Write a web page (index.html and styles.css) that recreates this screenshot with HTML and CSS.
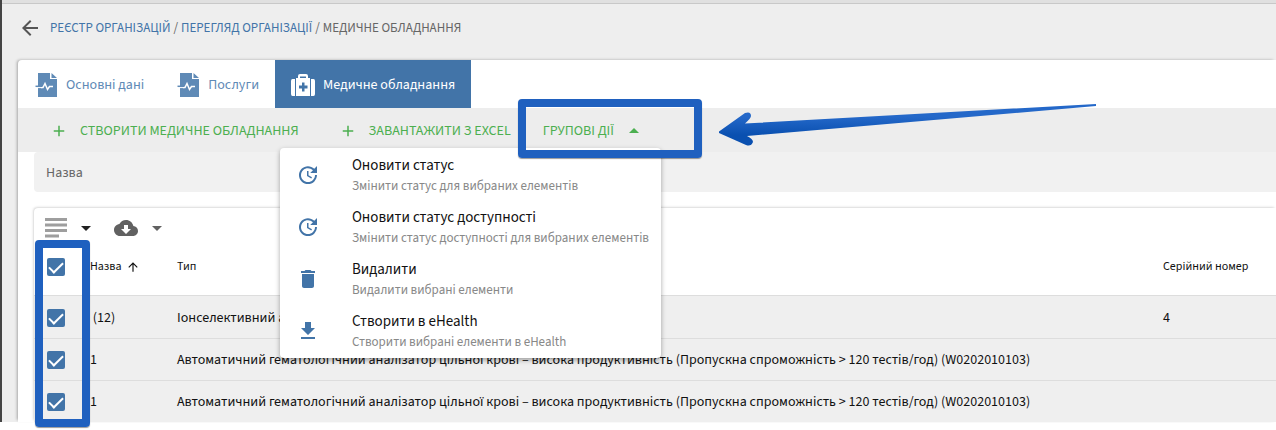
FILE: index.html
```html
<!DOCTYPE html>
<html lang="uk">
<head>
    <meta charset="UTF-8">
    <meta name="viewport" content="width=device-width, initial-scale=1">
    <title>Медичне обладнання</title>
    <link rel="stylesheet" href="styles.css">
</head>
<body>

<div class="app">
    <nav class="breadcrumbs">
        <button type="button" class="back" aria-label="Назад">
            <svg width="24" height="24" viewBox="0 0 24 24"><path d="M20 11H7.830l5.590-5.590L12 4l-8 8 8 8 1.410-1.410L7.830 13H20v-2z" fill="currentColor"/></svg>
        </button>
        <a href="#">РЕЄСТР ОРГАНІЗАЦІЙ</a>
        <span>/</span>
        <a href="#">ПЕРЕГЛЯД ОРГАНІЗАЦІЇ</a>
        <span>/</span>
        <span>МЕДИЧНЕ ОБЛАДНАННЯ</span>
    </nav>

    <main class="card">
        <div class="tabs">
            <button type="button" class="tab">
                <svg width="24" height="24" viewBox="0 0 24 24"><path d="M4 0h12v6h7v18H4zM17.500 0 23 5h-5.500z" fill="currentColor"/><path d="M7 14.500h2l2-4 2.500 6 2-3H19" fill="none" stroke="#fff" stroke-width="1.500"/><path d="M1.500 13.300H8" stroke="currentColor" stroke-width="1.500"/><path d="M4 14.600h4" stroke="#fff"/></svg>
                Основні дані
            </button>
            <button type="button" class="tab">
                <svg width="24" height="24" viewBox="0 0 24 24"><path d="M4 0h12v6h7v18H4zM17.500 0 23 5h-5.500z" fill="currentColor"/><path d="M7 14.500h2l2-4 2.500 6 2-3H19" fill="none" stroke="#fff" stroke-width="1.500"/><path d="M1.500 13.300H8" stroke="currentColor" stroke-width="1.500"/><path d="M4 14.600h4" stroke="#fff"/></svg>
                Послуги
            </button>
            <button type="button" class="tab active">
                <svg width="24" height="24" viewBox="0 0 24 24"><path fill="currentColor" fill-rule="evenodd" d="M5 5h2V3q0-2 2-2h6q2 0 2 2v2h2v18H5zM9 5h6V3.500H9zm2 4.500v3H8v3h3v3h2.500v-3h3v-3h-3v-3zM1.500 6H4v17H1.500Q0 23 0 21V8q0-2 1.500-2zM20 6h2.500Q24 6 24 8v13q0 2-1.500 2H20z"/></svg>
                Медичне обладнання
            </button>
        </div>

        <div class="actions">
            <button type="button" class="action">
                <svg width="18" height="18" viewBox="0 0 24 24"><path d="M19 13h-6v6h-2v-6H5v-2h6V5h2v6h6v2z" fill="currentColor"/></svg>
                СТВОРИТИ МЕДИЧНЕ ОБЛАДНАННЯ
            </button>
            <button type="button" class="action">
                <svg width="18" height="18" viewBox="0 0 24 24"><path d="M19 13h-6v6h-2v-6H5v-2h6V5h2v6h6v2z" fill="currentColor"/></svg>
                ЗАВАНТАЖИТИ З EXCEL
            </button>
            <div class="group">
                <button type="button" class="action" aria-expanded="true">
                    ГРУПОВІ ДІЇ
                    <svg width="24" height="24" viewBox="0 0 24 24"><path d="M7 14l5-5 5 5z" fill="currentColor"/></svg>
                </button>
                <div class="menu" role="menu">
                    <button type="button" class="menu-item" role="menuitem">
                        <svg width="24" height="24" viewBox="0 0 24 24"><path d="M21 10.120h-6.780l2.740-2.820c-2.730-2.700-7.150-2.800-9.880-.1-2.730 2.710-2.730 7.080 0 9.790s7.150 2.710 9.880 0C18.320 15.650 19 14.080 19 12.100h2c0 1.980-.88 4.550-2.640 6.290-3.510 3.480-9.210 3.480-12.720 0-3.500-3.470-3.530-9.110-.02-12.580s9.140-3.470 12.650 0L21 3v7.120zM12.500 8v4.250l3.500 2.080-.72 1.210L11 13V8h1.500z" fill="currentColor"/></svg>
                        <span class="menu-text"><strong>Оновити статус</strong><small>Змінити статус для вибраних елементів</small></span>
                    </button>
                    <button type="button" class="menu-item" role="menuitem">
                        <svg width="24" height="24" viewBox="0 0 24 24"><path d="M21 10.120h-6.780l2.740-2.820c-2.730-2.700-7.150-2.800-9.880-.1-2.730 2.710-2.730 7.080 0 9.790s7.150 2.710 9.880 0C18.320 15.650 19 14.080 19 12.100h2c0 1.980-.88 4.550-2.640 6.290-3.510 3.480-9.210 3.480-12.720 0-3.500-3.470-3.530-9.110-.02-12.580s9.140-3.470 12.650 0L21 3v7.120zM12.500 8v4.250l3.500 2.080-.72 1.210L11 13V8h1.500z" fill="currentColor"/></svg>
                        <span class="menu-text"><strong>Оновити статус доступності</strong><small>Змінити статус доступності для вибраних елементів</small></span>
                    </button>
                    <button type="button" class="menu-item" role="menuitem">
                        <svg width="24" height="24" viewBox="0 0 24 24"><path d="M6 19c0 1.100.9 2 2 2h8c1.100 0 2-.9 2-2V7H6v12zM19 4h-3.500l-1-1h-5l-1 1H5v2h14V4z" fill="currentColor"/></svg>
                        <span class="menu-text"><strong>Видалити</strong><small>Видалити вибрані елементи</small></span>
                    </button>
                    <button type="button" class="menu-item" role="menuitem">
                        <svg width="24" height="24" viewBox="0 0 24 24"><path d="M19 9h-4V3H9v6H5l7 7 7-7zM5 18v2h14v-2H5z" fill="currentColor"/></svg>
                        <span class="menu-text"><strong>Створити в eHealth</strong><small>Створити вибрані елементи в eHealth</small></span>
                    </button>
                </div>
                <div class="mark mark-group"></div>
                <svg class="arrow" width="382" height="46" viewBox="0 0 382 46">
                    <defs>
                        <linearGradient id="arrowFill" x1="0" y1="0" x2="0" y2="1">
                            <stop offset="0.300" stop-color="#2468c9"/>
                            <stop offset="0.750" stop-color="#0a50b0"/>
                        </linearGradient>
                    </defs>
                    <path d="M1 28.500 27 10q6-2 6 3 0 2-6 7.500L378 1v2L29 33q6 3 6 6-2 5-7 3L1 30z" fill="url(#arrowFill)"/>
                </svg>
            </div>
        </div>

        <div class="content">
            <input type="text" class="filter" placeholder="Назва" aria-label="Назва">

            <section class="list">
                <div class="mark mark-checks"></div>
                <div class="toolbar">
                    <button type="button" aria-label="Щільність рядків">
                        <svg width="22" height="20" viewBox="0 0 22 20"><path d="M0 0h22v3H0zM0 5.500h22v3H0zM0 11h22v3H0zM0 16.500h14v3H0z" fill="#9e9e9e"/></svg>
                        <svg width="24" height="24" viewBox="0 0 24 24"><path d="M7 10l5 5 5-5z" fill="#212121"/></svg>
                    </button>
                    <button type="button" aria-label="Завантажити">
                        <svg width="24" height="24" viewBox="0 0 24 24"><path d="M19.350 10.040C18.670 6.590 15.640 4 12 4 9.110 4 6.600 5.640 5.350 8.040 2.340 8.360 0 10.910 0 14c0 3.310 2.690 6 6 6h13c2.760 0 5-2.240 5-5 0-2.640-2.050-4.780-4.650-4.960zM17 13l-5 5-5-5h3V9h4v4h3z" fill="currentColor"/></svg>
                        <svg width="24" height="24" viewBox="0 0 24 24"><path d="M7 10l5 5 5-5z" fill="currentColor"/></svg>
                    </button>
                </div>
                <table>
                    <thead>
                        <tr>
                            <th class="check"><input type="checkbox" aria-label="Вибрати всі" checked></th>
                            <th class="name">
                                <span class="sort">Назва
                                    <svg width="14" height="14" viewBox="0 0 24 24"><path d="M4 12l1.410 1.410L11 7.830V20h2V7.830l5.580 5.590L20 12l-8-8-8 8z" fill="currentColor"/></svg>
                                </span>
                            </th>
                            <th>Тип</th>
                            <th class="serial">Серійний номер</th>
                        </tr>
                    </thead>
                    <tbody>
                        <tr>
                            <td class="check"><input type="checkbox" aria-label="Вибрати (12)" checked></td>
                            <td>&nbsp;(12)</td>
                            <td>Іонселективний аналізатор</td>
                            <td>4</td>
                        </tr>
                        <tr>
                            <td class="check"><input type="checkbox" aria-label="Вибрати 1" checked></td>
                            <td>1</td>
                            <td>Автоматичний гематологічний аналізатор цільної крові – висока продуктивність (Пропускна спроможність &gt; 120 тестів/год) (W0202010103)</td>
                            <td></td>
                        </tr>
                        <tr>
                            <td class="check"><input type="checkbox" aria-label="Вибрати 1" checked></td>
                            <td>1</td>
                            <td>Автоматичний гематологічний аналізатор цільної крові – висока продуктивність (Пропускна спроможність &gt; 120 тестів/год) (W0202010103)</td>
                            <td></td>
                        </tr>
                    </tbody>
                </table>
            </section>
        </div>
    </main>
</div>

</body>
</html>
```

FILE: styles.css
```css
* {
    box-sizing: border-box;
}
body {
    margin: 0;
    min-height: 100vh;
    background: #fff;
    color: #111;
    font-family: "Source Sans 3", "Noto Sans", sans-serif;
    font-size: 14px;
    line-height: 20px;
}
button {
    display: flex;
    align-items: center;
    padding: 0;
    border: none;
    background: none;
    color: inherit;
    font: inherit;
    white-space: nowrap;
    cursor: pointer;
}
svg {
    display: block;
    flex: none;
}
.app {
    padding-left: 16px;
    border-left: 2px solid #444;
    background: #eee;
}
.app::before {
    content: "";
    display: block;
    height: 4px;
    margin-left: -16px;
    background: #e0e0e0;
    border-bottom: 1px solid #c8c8c8;
    box-sizing: border-box;
}

/* breadcrumbs */
.breadcrumbs {
    display: flex;
    align-items: center;
    gap: 3px;
    height: 56px;
    padding-bottom: 8px;
    color: #666;
    font-size: 13px;
}
.breadcrumbs a {
    color: #4274a8;
    text-decoration: none;
}
.back {
    margin-right: 5px;
    color: #555;
}

/* tabs */
.card {
    background: #fff;
    border-top-left-radius: 4px;
    box-shadow: -2px -1px 3px -1px rgba(0,0,0,0.3);
}
.tabs {
    display: flex;
    height: 48px;
}
.tab {
    gap: 8px;
    padding: 1px 16px 0;
    color: #5f8ab6;
}
.tab.active {
    background: #4274a8;
    color: #fff;
}

/* actions */
.actions {
    display: flex;
    align-items: center;
    gap: 32px;
    height: 44px;
    padding-left: 32px;
    background: #ededed;
    color: #4caf50;
}
.action {
    gap: 12px;
    padding-top: 1px;
}
.action + .action {
    margin-left: 8px;
}
.group {
    position: relative;
}
.group .action {
    gap: 8px;
}
.menu {
    position: absolute;
    z-index: 2;
    top: 30px;
    right: -15px;
    padding: 1px 0;
    background: #fff;
    border-radius: 4px;
    box-shadow: 0 2px 5px rgba(0,0,0,0.35);
}
.menu-item {
    gap: 32px;
    width: 100%;
    height: 52px;
    padding: 0 12px 0 16px;
    color: #4274a8;
    text-align: left;
}
.menu-text {
    padding-top: 2px;
}
.menu-text strong,
.menu-text small {
    display: block;
    font-weight: normal;
}
.menu-text strong {
    color: #111;
    font-size: 15px;
}
.menu-text small {
    color: #888;
    font-size: 13px;
}
.mark {
    position: absolute;
    z-index: 3;
    border: 8px solid #1f60bf;
    border-radius: 4px;
    box-shadow: 0 1px 1px rgba(0,0,0,0.4);
    pointer-events: none;
}
.mark-group {
    top: -19px;
    left: -25px;
    width: 184px;
    height: 59px;
}
.arrow {
    position: absolute;
    z-index: 3;
    top: -15px;
    left: 175px;
    pointer-events: none;
}

/* filter and table */
.content {
    padding-left: 16px;
}
.filter {
    display: block;
    width: 100%;
    height: 40px;
    padding: 2px 12px 0;
    border: none;
    border-radius: 4px 0 0 4px;
    background: #f1f1f1;
    color: #111;
    font: inherit;
}
.filter::placeholder {
    color: #666;
    opacity: 1;
}
.list {
    position: relative;
    margin-top: 16px;
    border-top-left-radius: 4px;
    box-shadow: -1px -1px 3px -1px rgba(0,0,0,0.3);
}
.mark-checks {
    top: 32px;
    left: 1px;
    width: 55px;
    height: 187px;
}
.toolbar {
    display: flex;
    align-items: center;
    gap: 16px;
    height: 40px;
    padding-left: 11px;
    color: #616161;
}
.toolbar button {
    gap: 7px;
}
table {
    width: 100%;
    border-collapse: collapse;
}
th,
td {
    height: 42px;
    padding: 2px 0 0;
    border-top: 1px solid #ddd;
    text-align: left;
    font-weight: normal;
    white-space: nowrap;
}
tbody tr:first-child td {
    height: 43px;
}
th {
    height: 47px;
    padding: 0 0 8px;
    border: none;
    font-size: 12px;
}
.check {
    width: 56px;
    padding-left: 13px;
}
.name {
    width: 87px;
}
.serial {
    width: 113px;
}
tbody {
    background: #efefef;
}
.sort {
    display: flex;
    align-items: center;
    gap: 4px;
}
input[type="checkbox"] {
    appearance: none;
    display: block;
    width: 18px;
    height: 18px;
    margin: 0;
    border-radius: 2px;
    background: #4274a8;
}
input[type="checkbox"]:checked::before {
    content: "";
    display: block;
    box-sizing: border-box;
    width: 14px;
    height: 8px;
    margin: 0 2px;
    border: solid #fff;
    border-width: 0 0 2px 2px;
    transform: translateY(4px) rotate(-45deg);
}
```
